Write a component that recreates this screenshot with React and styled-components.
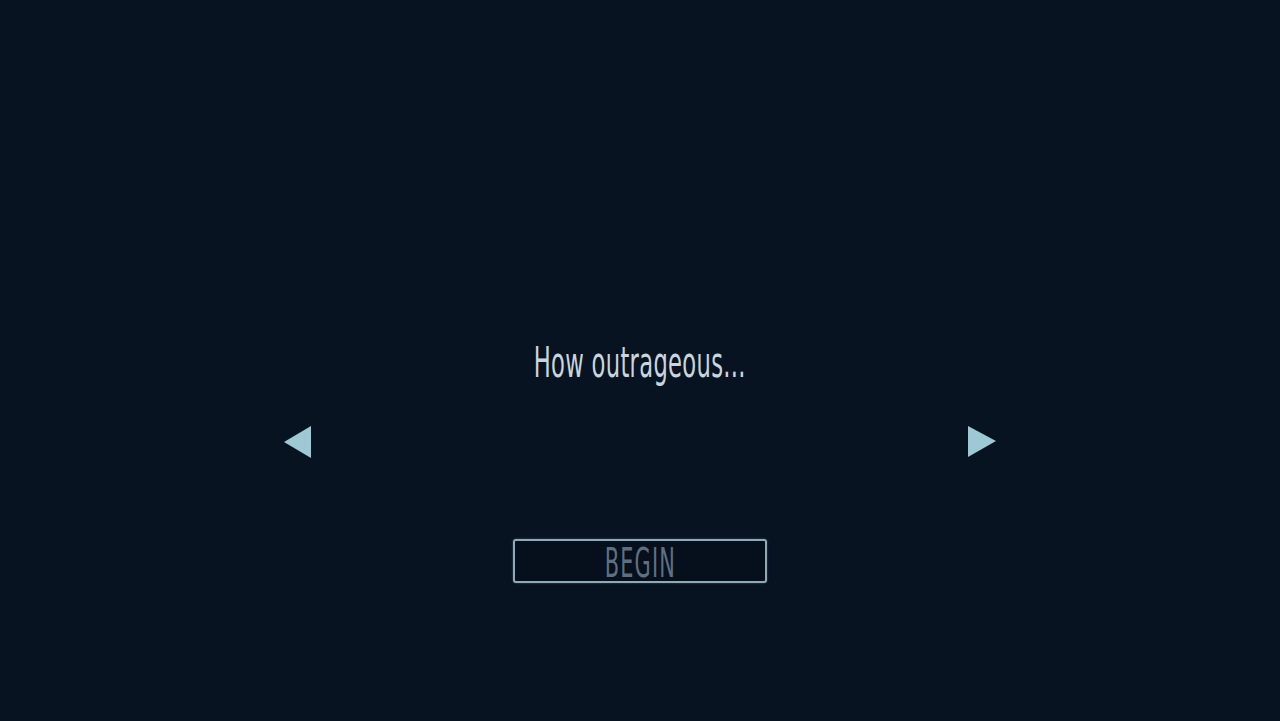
import React from 'react';
import styled, { createGlobalStyle } from 'styled-components';

const GlobalStyle = createGlobalStyle`
  html, body {
    margin: 0;
    padding: 0;
    background: #081322;
  }

  *, *::after, *::before {
    box-sizing: border-box;
  }
`;

const Screen = styled.div`
  width: 100vw;
  height: 100vh;
  display: flex;
  flex-direction: column;
  align-items: center;
  background: #081322;
  font-family: 'DejaVu Sans Condensed', 'DejaVu Sans', sans-serif;
  padding-top: 340px;
`;

const Message = styled.div`
  height: 44px;
  display: flex;
  align-items: center;
  color: #c9d5de;
  font-size: 42px;
  letter-spacing: 0.5px;
  transform: scaleX(0.6);
  white-space: nowrap;
`;

const ArrowRow = styled.div`
  width: 714px;
  margin-top: 41px;
  display: flex;
  justify-content: space-between;
  align-items: center;
`;

const Arrow = styled.button`
  width: 30px;
  height: 33px;
  padding: 0;
  border: none;
  background: transparent;
  cursor: pointer;
  display: flex;
  align-items: center;
  justify-content: center;

  svg {
    display: block;
  }
`;

const BeginButton = styled.button`
  margin-top: 81px;
  width: 254px;
  height: 44px;
  border: 2px solid #8fa9b5;
  border-radius: 3px;
  background: #060f1c;
  box-shadow: 0 0 2px rgba(143, 169, 181, 0.5);
  display: flex;
  align-items: center;
  justify-content: center;
  padding: 0;
  cursor: pointer;
`;

const ButtonLabel = styled.span`
  font-family: 'DejaVu Sans Condensed', 'DejaVu Sans', sans-serif;
  color: #5f6f82;
  font-size: 40px;
  letter-spacing: 2px;
  transform: scaleX(0.58);
  line-height: 1;
  margin-top: 3px;
`;

const Triangle = ({ dir }) => (
  <svg width="30" height="33" viewBox="0 0 30 33">
    {dir === 'left' ? (
      <polygon points="1,17 28,1 28,33" fill="#9dc8d4" />
    ) : (
      <polygon points="1,1 1,32 29,16" fill="#9dc8d4" />
    )}
  </svg>
);

const App = () => (
  <>
    <GlobalStyle />
    <Screen>
      <Message>How outrageous...</Message>
      <ArrowRow>
        <Arrow aria-label="previous"><Triangle dir="left" /></Arrow>
        <Arrow aria-label="next"><Triangle dir="right" /></Arrow>
      </ArrowRow>
      <BeginButton>
        <ButtonLabel>BEGIN</ButtonLabel>
      </BeginButton>
    </Screen>
  </>
);

export default App;
